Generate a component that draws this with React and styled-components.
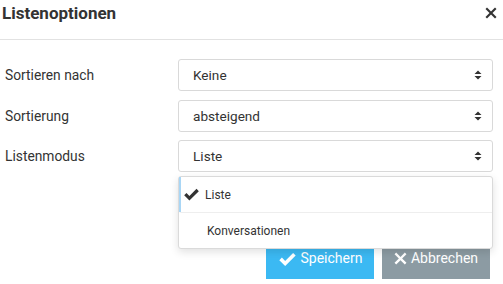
import React from "react";
import styled, { createGlobalStyle } from "styled-components";

const Global = createGlobalStyle`
  html, body { margin: 0; padding: 0; background: #fff; }
  body { font-family: Roboto, "Liberation Sans", sans-serif; color: #333; overflow: hidden; }
`;

const Dialog = styled.div`
  width: 503px;
  height: 284px;
  position: relative;
  overflow: hidden;
`;

const Header = styled.div`
  height: 40px;
  display: flex;
  align-items: center;
  justify-content: space-between;
  padding: 0 6px 0 2px;
  border-bottom: 1px solid #e2e2e2;
  box-sizing: border-box;
  h1 {
    margin: 0 0 13px;
    font-size: 17px;
    font-weight: 700;
    color: #333;
  }
`;

const Close = styled.button`
  border: 0;
  background: none;
  padding: 0;
  margin-bottom: 14px;
  display: flex;
  cursor: pointer;
`;

const Body = styled.div`
  padding: 19px 10px 0 5px;
  display: flex;
  flex-direction: column;
  gap: 8.5px;
`;

const Row = styled.div`
  display: grid;
  grid-template-columns: 173px 1fr;
  align-items: center;
  position: relative;
`;

const Label = styled.label`
  font-size: 13.8px;
  color: #333;
`;

const Select = styled.div`
  height: 32px;
  box-sizing: border-box;
  border: 1px solid #d9d9d9;
  border-radius: 3px;
  display: flex;
  align-items: center;
  justify-content: space-between;
  padding: 0 10px 0 14px;
  font-size: 13.6px;
  color: #333;
`;

const Menu = styled.ul`
  position: absolute;
  left: 173px;
  right: 0;
  top: 36px;
  margin: 0;
  padding: 0;
  list-style: none;
  background: #fff;
  border: 1px solid #dadada;
  border-radius: 3px;
  box-shadow: 0 3px 8px rgba(0, 0, 0, 0.12);
  z-index: 2;
`;

const Option = styled.li`
  height: 35px;
  display: flex;
  align-items: center;
  gap: 5px;
  padding-left: ${p => (p.$active ? "2px" : "26px")};
  font-size: 12px;
  color: #333;
  border-left: 2px solid ${p => (p.$active ? "#a9d6f5" : "transparent")};
  & + & { border-top: 1px solid #eeeeee; }
`;

const Footer = styled.div`
  display: flex;
  justify-content: flex-end;
  gap: 8px;
  padding-right: 13px;
  margin-top: 67px;
`;

const Button = styled.button`
  width: 108px;
  height: 40px;
  border: 0;
  border-radius: 0;
  background: ${p => (p.$primary ? "#3bb9f3" : "#8c9ba3")};
  color: #fff;
  font-family: Roboto, "Liberation Sans", sans-serif;
  font-size: 14px;
  display: flex;
  align-items: flex-start;
  justify-content: center;
  gap: 4px;
  padding-top: 11px;
  box-sizing: border-box;
  svg { margin-top: 2px; }
`;

const Caret = () => (
  <svg width="8" height="10" viewBox="0 0 8 10">
    <path d="M4 0.5 L7.5 4 H0.5 Z M4 9.5 L7.5 6 H0.5 Z" fill="#333" />
  </svg>
);

const Check = ({ color = "#333", size = 15 }) => (
  <svg width={size} height={size * 0.8} viewBox="0 0 16 13">
    <path d="M1 7 L3.2 4.8 L6 7.6 L12.8 0.8 L15 3 L6 12 Z" fill={color} />
  </svg>
);

const Cross = ({ color = "#fff", size = 12 }) => (
  <svg width={size} height={size} viewBox="0 0 12 12">
    <path d="M2 0.5 L6 4.5 L10 0.5 L11.5 2 L7.5 6 L11.5 10 L10 11.5 L6 7.5 L2 11.5 L0.5 10 L4.5 6 L0.5 2 Z" fill={color} />
  </svg>
);

const fields = [
  { label: "Sortieren nach", value: "Keine" },
  { label: "Sortierung", value: "absteigend" },
  { label: "Listenmodus", value: "Liste", open: true },
];

export default function App() {
  return (
    <Dialog>
      <Global />
      <Header>
        <h1>Listenoptionen</h1>
        <Close aria-label="Schließen">
          <Cross color="#333" size={12} />
        </Close>
      </Header>
      <Body>
        {fields.map(f => (
          <Row key={f.label}>
            <Label>{f.label}</Label>
            <Select>
              <span>{f.value}</span>
              <Caret />
            </Select>
            {f.open && (
              <Menu>
                <Option $active>
                  <Check size={17} />
                  <span>Liste</span>
                </Option>
                <Option>Konversationen</Option>
              </Menu>
            )}
          </Row>
        ))}
      </Body>
      <Footer>
        <Button $primary>
          <Check color="#fff" size={19} />
          Speichern
        </Button>
        <Button>
          <Cross size={13} />
          Abbrechen
        </Button>
      </Footer>
    </Dialog>
  );
}
